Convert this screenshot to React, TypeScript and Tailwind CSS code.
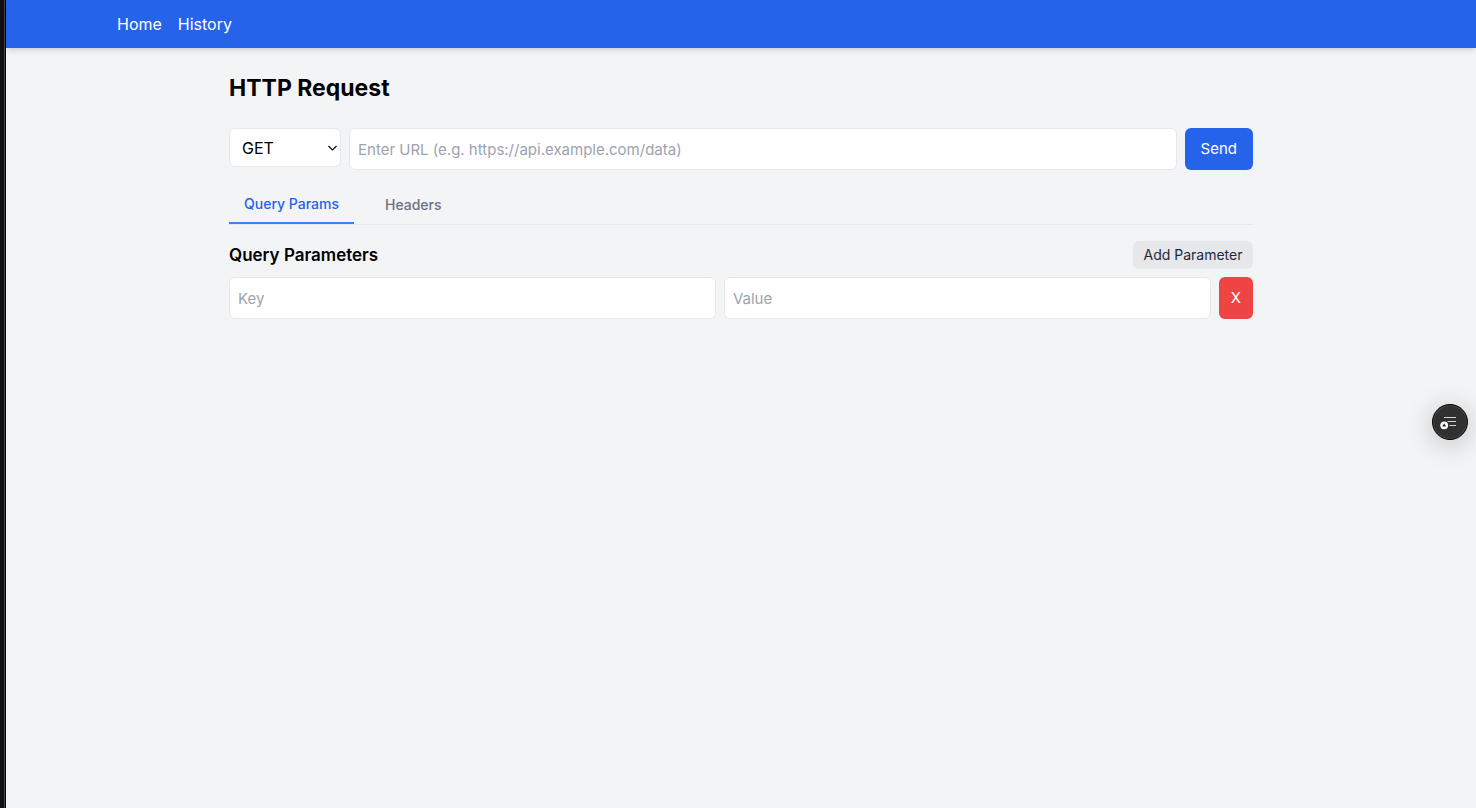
import { useState } from "react";

interface Row {
  key: string;
  value: string;
}

const METHODS = ["GET", "POST", "PUT", "PATCH", "DELETE"];

const inputClass =
  "h-[42px] min-w-0 flex-1 rounded-md border border-[#e5e7eb] bg-white px-2 text-[15px] text-black placeholder:text-[#9ca3af]";

function NavBar() {
  return (
    <nav className="bg-[#2563eb] text-white shadow-md">
      <div className="mx-auto flex max-w-7xl gap-4 px-4 py-3">
        <a href="#home">Home</a>
        <a href="#history">History</a>
      </div>
    </nav>
  );
}

interface TabButtonProps {
  label: string;
  active: boolean;
  onClick: () => void;
}

function TabButton({ label, active, onClick }: TabButtonProps) {
  return (
    <button
      type="button"
      role="tab"
      aria-selected={active}
      onClick={onClick}
      className={
        active
          ? "border-b-2 border-[#3b82f6] px-[15px] py-2 text-sm font-medium text-[#2563eb]"
          : "px-[15px] py-2 text-sm font-medium text-[#6b7280]"
      }
    >
      {label}
    </button>
  );
}

interface PairEditorProps {
  title: string;
  addLabel: string;
  rows: Row[];
  onChange: (rows: Row[]) => void;
}

function PairEditor({ title, addLabel, rows, onChange }: PairEditorProps) {
  const update = (index: number, patch: Partial<Row>) =>
    onChange(rows.map((row, i) => (i === index ? { ...row, ...patch } : row)));

  return (
    <section>
      <div className="mb-2 flex items-center justify-between">
        <h2 className="text-[17px] leading-7 font-semibold">{title}</h2>
        <button
          type="button"
          onClick={() => onChange([...rows, { key: "", value: "" }])}
          className="min-w-30 rounded-md bg-[#e5e7eb] px-2 py-1 text-sm text-[#1f2937]"
        >
          {addLabel}
        </button>
      </div>
      {rows.map((row, i) => (
        <div key={i} className="mb-2 flex gap-2">
          <input
            type="text"
            aria-label="Key"
            placeholder="Key"
            value={row.key}
            onChange={(e) => update(i, { key: e.target.value })}
            className={inputClass}
          />
          <input
            type="text"
            aria-label="Value"
            placeholder="Value"
            value={row.value}
            onChange={(e) => update(i, { value: e.target.value })}
            className={inputClass}
          />
          <button
            type="button"
            onClick={() => onChange(rows.filter((_, j) => j !== i))}
            className="rounded-md bg-[#ef4444] px-3 text-[15px] text-white"
          >
            X
          </button>
        </div>
      ))}
    </section>
  );
}

function AssistantButton() {
  return (
    <button
      type="button"
      aria-label="Open assistant"
      className="fixed top-1/2 right-2 flex size-9 items-center justify-center rounded-full border border-black bg-[#303030] shadow-[0_4px_28px_rgba(0,0,0,0.22)] ring-1 ring-[#484848] ring-inset"
    >
      <svg
        className="overflow-visible"
        width="18"
        height="18"
        viewBox="0 0 18 18"
        fill="none"
      >
        <path
          d="M3 4.5H15M6.5 8.5H15M8.5 12.5H15"
          stroke="#d4d4d4"
          strokeWidth="1.2"
        />
        <circle cx="3.2" cy="12.3" r="3.9" fill="white" />
        <path d="M3.2 10.2L5.2 13.6H1.2Z" fill="#303030" />
      </svg>
    </button>
  );
}

export default function App() {
  const [method, setMethod] = useState("GET");
  const [url, setUrl] = useState("");
  const [tab, setTab] = useState("params");
  const [params, setParams] = useState<Row[]>([{ key: "", value: "" }]);
  const [headers, setHeaders] = useState<Row[]>([{ key: "", value: "" }]);

  return (
    <div className="flex min-h-screen bg-[#f3f4f6] font-['Inter',sans-serif] text-black">
      <div className="w-[6px] shrink-0 border-r border-black bg-[#111111]">
        <div className="ml-auto h-full w-px bg-[#444444]" />
      </div>
      <div className="min-w-0 flex-1">
        <NavBar />
        <main className="mx-auto max-w-5xl py-6">
          <h1 className="mb-6 text-[23px] leading-8 font-bold">HTTP Request</h1>
          <form
            className="mb-4 flex items-start gap-2"
            onSubmit={(e) => e.preventDefault()}
          >
            <div className="relative w-28">
              <select
                aria-label="Method"
                value={method}
                onChange={(e) => setMethod(e.target.value)}
                className="h-[39px] w-full appearance-none rounded-md border border-[#e5e7eb] bg-white px-3"
              >
                {METHODS.map((m) => (
                  <option key={m}>{m}</option>
                ))}
              </select>
              <svg
                className="pointer-events-none absolute top-4 right-1"
                width="9"
                height="8"
                viewBox="0 0 9 8"
                fill="none"
              >
                <path d="M0.5 2L4.5 6L8.5 2" stroke="black" strokeWidth="1.1" />
              </svg>
            </div>
            <input
              type="text"
              aria-label="URL"
              placeholder="Enter URL (e.g. https://api.example.com/data)"
              value={url}
              onChange={(e) => setUrl(e.target.value)}
              className={inputClass}
            />
            <button
              type="submit"
              className="self-stretch rounded-md bg-[#2563eb] px-4 text-[15px] text-white"
            >
              Send
            </button>
          </form>
          <div role="tablist" className="mb-4 flex gap-4 border-b border-[#e5e7eb]">
            <TabButton
              label="Query Params"
              active={tab === "params"}
              onClick={() => setTab("params")}
            />
            <TabButton
              label="Headers"
              active={tab === "headers"}
              onClick={() => setTab("headers")}
            />
          </div>
          {tab === "params" ? (
            <PairEditor
              title="Query Parameters"
              addLabel="Add Parameter"
              rows={params}
              onChange={setParams}
            />
          ) : (
            <PairEditor
              title="Headers"
              addLabel="Add Header"
              rows={headers}
              onChange={setHeaders}
            />
          )}
        </main>
      </div>
      <AssistantButton />
    </div>
  );
}
